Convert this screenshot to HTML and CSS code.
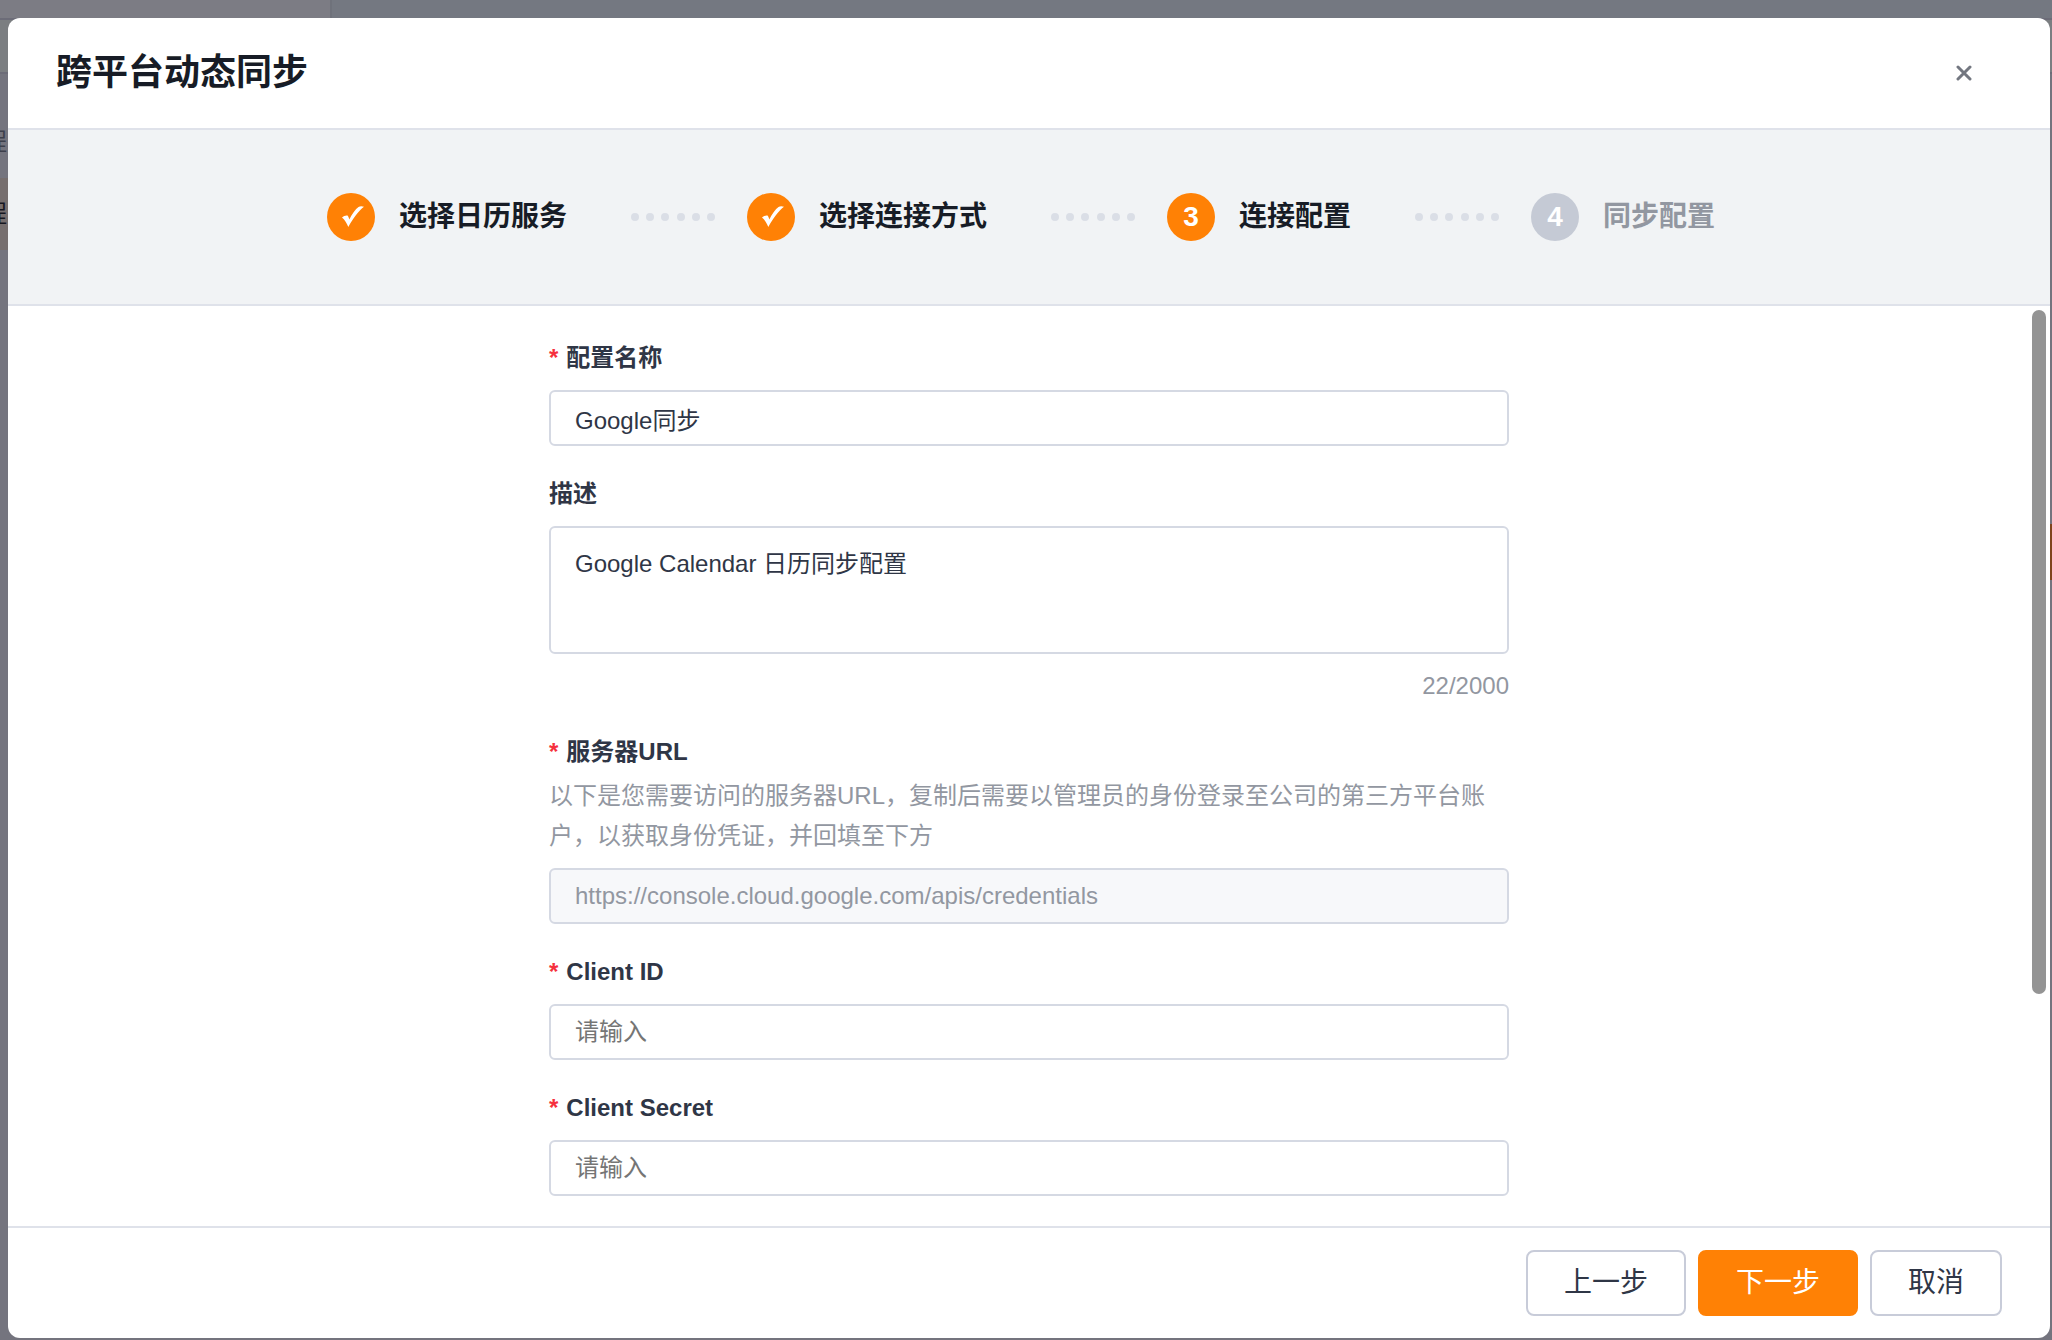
FILE: index.html
```html
<!DOCTYPE html>
<html lang="zh-CN">
<head>
    <meta charset="UTF-8">
    <meta name="viewport" content="width=device-width, initial-scale=1.0">
    <title>跨平台动态同步</title>
    <link rel="stylesheet" href="styles.css">
</head>
<body>
    <!-- Page behind the dialog -->
    <div class="page">
        <div class="page-top"></div>
        <div class="page-bar"></div>
        <div class="page-item"><span>日程</span></div>
        <div class="page-item active"><span>日程</span></div>
        <div class="page-tab"></div>
    </div>

    <div class="mask">
        <div class="dialog" role="dialog" aria-labelledby="dialogTitle">
            <header class="dialog-header">
                <h1 class="dialog-title" id="dialogTitle">跨平台动态同步</h1>
                <button class="close" type="button" aria-label="关闭">
                    <svg viewBox="0 0 16 16" width="16" height="16">
                        <path d="M2 2L14 14M14 2L2 14" fill="none" stroke="currentColor" stroke-width="3" stroke-linecap="round"/>
                    </svg>
                </button>
            </header>

            <ol class="steps">
                <li class="step">
                    <span class="step-icon">
                        <svg viewBox="-4 0 26 23" width="26" height="23">
                            <path d="M0 11.5C1.500 10 4 9.200 5.500 9.600C6.300 10.500 6.900 12 7.300 13.600C10 8 13.500 3.200 16.500 1C18 0 20 0 22 0.800C17 4.500 11 12.500 6.300 21C5 17.500 3 14 0 11.500Z" fill="currentColor"/>
                        </svg>
                    </span>
                    <span class="step-text">选择日历服务</span>
                </li>
                <li class="dots"><i></i><i></i><i></i><i></i><i></i><i></i></li>
                <li class="step">
                    <span class="step-icon">
                        <svg viewBox="-4 0 26 23" width="26" height="23">
                            <path d="M0 11.5C1.500 10 4 9.200 5.500 9.600C6.300 10.500 6.900 12 7.300 13.600C10 8 13.500 3.200 16.500 1C18 0 20 0 22 0.800C17 4.500 11 12.500 6.300 21C5 17.500 3 14 0 11.500Z" fill="currentColor"/>
                        </svg>
                    </span>
                    <span class="step-text">选择连接方式</span>
                </li>
                <li class="dots"><i></i><i></i><i></i><i></i><i></i><i></i></li>
                <li class="step">
                    <span class="step-icon">3</span>
                    <span class="step-text">连接配置</span>
                </li>
                <li class="dots"><i></i><i></i><i></i><i></i><i></i><i></i></li>
                <li class="step wait">
                    <span class="step-icon">4</span>
                    <span class="step-text">同步配置</span>
                </li>
            </ol>

            <div class="dialog-body">
                <form class="form" id="configForm">
                    <div class="field">
                        <label class="label required" for="configName">配置名称</label>
                        <input class="input" id="configName" type="text" value="Google同步">
                    </div>
                    <div class="field">
                        <label class="label" for="configDesc">描述</label>
                        <textarea class="input textarea" id="configDesc" maxlength="2000">Google Calendar 日历同步配置</textarea>
                        <p class="count">22/2000</p>
                    </div>
                    <div class="field">
                        <label class="label label-tight required" for="serverUrl">服务器URL</label>
                        <p class="hint">以下是您需要访问的服务器URL，复制后需要以管理员的身份登录至公司的第三方平台账户，以获取身份凭证，并回填至下方</p>
                        <input class="input" id="serverUrl" type="text" value="https://console.cloud.google.com/apis/credentials" disabled>
                    </div>
                    <div class="field">
                        <label class="label required" for="clientId">Client ID</label>
                        <input class="input" id="clientId" type="text" placeholder="请输入">
                    </div>
                    <div class="field">
                        <label class="label required" for="clientSecret">Client Secret</label>
                        <input class="input" id="clientSecret" type="text" placeholder="请输入">
                    </div>
                </form>
                <div class="scroll-thumb"></div>
            </div>

            <footer class="dialog-footer">
                <button class="btn" type="button">上一步</button>
                <button class="btn primary" type="submit" form="configForm">下一步</button>
                <button class="btn" type="button">取消</button>
            </footer>
        </div>
    </div>
</body>
</html>
```

FILE: styles.css
```css
* {
    box-sizing: border-box;
    margin: 0;
    padding: 0;
}

:root {
    --color-title: #171c26;
    --color-text: #2f3646;
    --color-muted: #9297a1;
    --color-accent: #ff8105;
    --color-danger: #f5303d;
    --color-line: #dfe2ea;
    --color-border: #d5d9e3;
}

body {
    height: 100vh;
    overflow: hidden;
    color: var(--color-text);
    font-family: "Liberation Sans", "Noto Sans CJK SC", sans-serif;
    font-size: 24px;
    line-height: 40px;
}

button,
input,
textarea {
    font: inherit;
    color: inherit;
}

/* Page behind the dialog */
.page {
    position: fixed;
    inset: 0;
    overflow: hidden;
    background: #74747e;
}

.page-top {
    height: 20px;
    background: linear-gradient(90deg, #7c7c84 0 330px, #6f727b 330px 332px, #747881 332px);
    border-bottom: 2px solid #6c6c78;
}

.page-bar {
    height: 54px;
    margin-bottom: 32px;
    background: #7b7e81;
    border-bottom: 2px solid #6c6c78;
}

.page-item {
    display: flex;
    align-items: center;
    width: 320px;
    height: 72px;
    color: #3d3f4b;
}

.page-item span {
    width: 7px;
    display: flex;
    justify-content: flex-end;
    white-space: nowrap;
}

.page-item.active {
    color: #16161f;
    background: #766e6e;
}

.page-tab {
    width: 80px;
    height: 56px;
    margin: 274px 0 0 auto;
    background: #7f451d;
}

/* Dialog */
.mask {
    position: fixed;
    inset: 0;
    display: flex;
    padding: 18px 2px 2px 8px;
}

.dialog {
    flex: 1;
    display: flex;
    flex-direction: column;
    overflow: hidden;
    background: #fff;
    border-radius: 12px;
}

.dialog-header {
    display: flex;
    align-items: center;
    justify-content: space-between;
    padding: 31px 72px 31px 48px;
    border-bottom: 2px solid var(--color-line);
}

.dialog-title {
    color: var(--color-title);
    font-size: 36px;
    font-weight: 600;
    line-height: 48px;
}

.close {
    display: flex;
    padding: 6px;
    color: #737780;
    background: none;
    border: none;
    cursor: pointer;
}

.steps {
    display: flex;
    align-items: center;
    justify-content: center;
    padding: 63px 0;
    list-style: none;
    background: #f1f3f5;
    border-bottom: 2px solid var(--color-line);
}

.step {
    display: flex;
    align-items: center;
    gap: 24px;
    padding-right: 16px;
    color: var(--color-title);
    font-size: 28px;
    font-weight: 600;
}

.step-icon {
    display: flex;
    align-items: center;
    justify-content: center;
    width: 48px;
    height: 48px;
    color: #fff;
    background: var(--color-accent);
    border-radius: 50%;
}

.step.wait {
    color: var(--color-muted);
}

.step.wait .step-icon {
    background: #c5cad5;
}

.dots {
    display: flex;
    justify-content: space-between;
    width: 84px;
    margin: 0 32px 0 48px;
}

.dots i {
    width: 8px;
    height: 8px;
    background: #dadee6;
    border-radius: 50%;
}

.dialog-body {
    position: relative;
    flex: 1;
    min-height: 0;
    overflow: hidden;
    padding: 32px 24px;
}

.scroll-thumb {
    position: absolute;
    top: 4px;
    right: 4px;
    width: 14px;
    height: 74.4%;
    background: #949494;
    border-radius: 7px;
}

/* Form */
.form {
    display: flex;
    flex-direction: column;
    gap: 28px;
    max-width: 960px;
    margin: 0 auto;
}

.field {
    display: flex;
    flex-direction: column;
}

.label {
    margin-bottom: 12px;
    font-weight: 600;
}

.label-tight {
    margin-bottom: 4px;
}

.required::before {
    content: "*";
    margin-right: 8px;
    color: var(--color-danger);
}

.hint {
    margin-bottom: 12px;
    color: var(--color-muted);
}

.input {
    width: 100%;
    height: 56px;
    padding: 0 24px;
    line-height: normal;
    background: #fff;
    border: 2px solid var(--color-border);
    border-radius: 6px;
    outline: none;
}

.input:focus {
    border-color: var(--color-accent);
}

.input::placeholder {
    color: #757575;
}

.input:disabled {
    color: var(--color-muted);
    background: #f7f8fa;
}

.textarea {
    display: block;
    height: 128px;
    padding: 16px 24px;
    line-height: 40px;
    resize: none;
}

.count {
    margin: 12px 0 -2px;
    color: var(--color-muted);
    text-align: right;
}

/* Footer */
.dialog-footer {
    display: flex;
    justify-content: flex-end;
    gap: 12px;
    padding: 22px 48px;
    border-top: 2px solid var(--color-line);
}

.btn {
    height: 66px;
    padding: 0 36px;
    font-size: 28px;
    background: #fff;
    border: 2px solid #c8ccd9;
    border-radius: 8px;
    cursor: pointer;
}

.btn.primary {
    color: #fff;
    background: var(--color-accent);
    border-color: var(--color-accent);
}
```
